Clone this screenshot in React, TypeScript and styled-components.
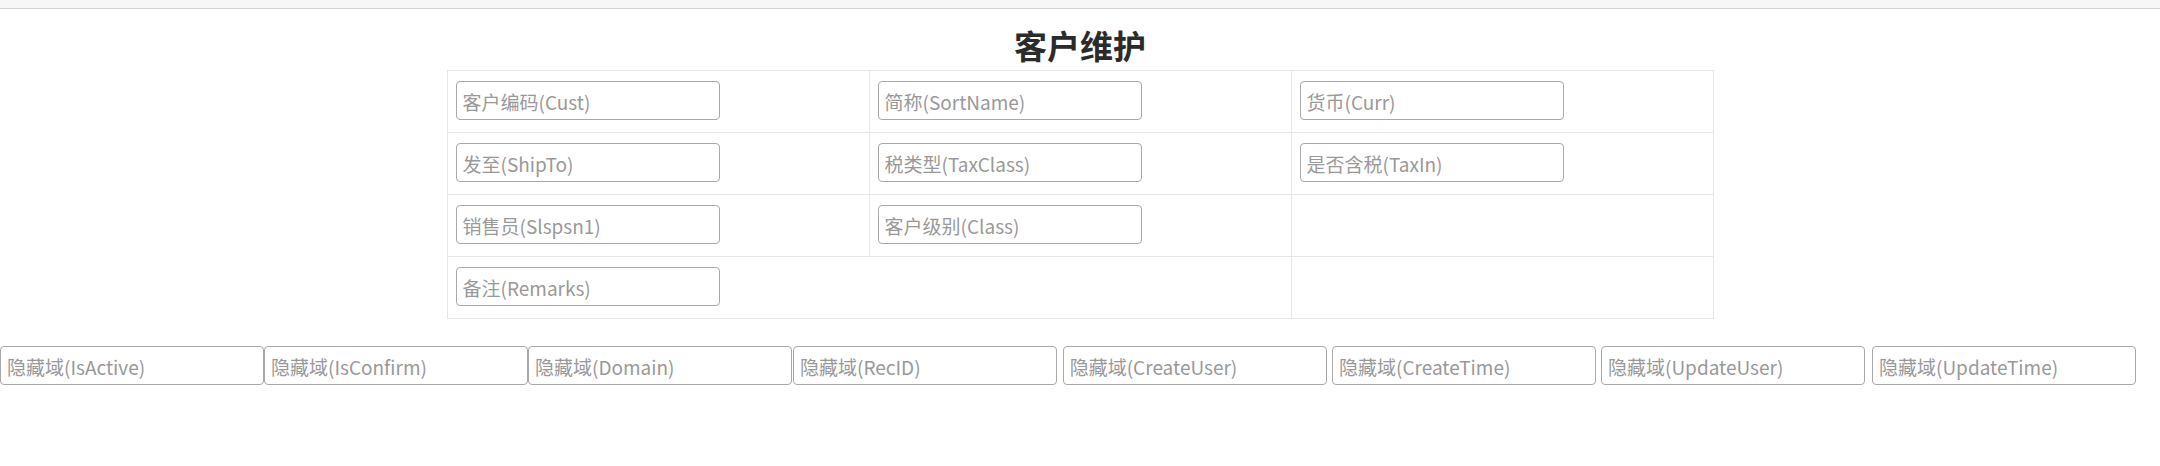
import styled, { createGlobalStyle } from 'styled-components'

const GlobalStyle = createGlobalStyle`
  html, body {
    margin: 0;
    padding: 0;
    background: #fff;
    font-family: "Noto Sans CJK SC", "Noto Sans", sans-serif;
  }
  * { box-sizing: border-box; }
`

const TopBar = styled.div`
  height: 9px;
  background: #f7f7f7;
  border-bottom: 1px solid #d2d2d2;
`

const Title = styled.h2`
  margin: 16px 0 5px;
  height: 40px;
  line-height: 40px;
  text-align: center;
  font-size: 33px;
  font-weight: 700;
  color: #2b2b2b;
`

const FormGrid = styled.div`
  display: grid;
  grid-template-columns: repeat(3, 422px);
  width: 1267px;
  margin: 0 auto;
  border-top: 1px solid #e6e6e6;
  border-left: 1px solid #e6e6e6;
`

const Cell = styled.div<{ $span?: number }>`
  grid-column: span ${p => p.$span || 1};
  height: 62px;
  padding: 10px 8px 0;
  border-right: 1px solid #e6e6e6;
  border-bottom: 1px solid #e6e6e6;
`

const Field = styled.input`
  display: block;
  width: 264px;
  height: 39px;
  padding: 1px 6px 0;
  border: 1px solid #a9a9a9;
  border-radius: 4px;
  background: #fff;
  font-family: "Noto Sans CJK SC", "Noto Sans", sans-serif;
  font-size: 19px;
  color: #333;
  outline: none;
  &::placeholder { color: #999; }
`

const HiddenRow = styled.div`
  display: flex;
  margin-top: 27px;
`

const HiddenSlot = styled.div<{ $gap: number }>`
  margin-left: ${p => p.$gap}px;
`

const rows: { name: string; span?: number }[][] = [
  [{ name: '客户编码(Cust)' }, { name: '简称(SortName)' }, { name: '货币(Curr)' }],
  [{ name: '发至(ShipTo)' }, { name: '税类型(TaxClass)' }, { name: '是否含税(TaxIn)' }],
  [{ name: '销售员(Slspsn1)' }, { name: '客户级别(Class)' }, { name: '' }],
  [{ name: '备注(Remarks)', span: 2 }, { name: '' }],
]

const hidden = ['IsActive', 'IsConfirm', 'Domain', 'RecID', 'CreateUser', 'CreateTime', 'UpdateUser', 'UpdateTime']
const gaps = [0, 0, 0, 1, 5.7, 5.3, 5, 7]

export default function App() {
  return (
    <>
      <GlobalStyle />
      <TopBar />
      <Title>客户维护</Title>
      <FormGrid>
        {rows.map((row, i) =>
          row.map((c, j) => (
            <Cell key={`${i}-${j}`} $span={c.span}>
              {c.name && <Field placeholder={c.name} />}
            </Cell>
          ))
        )}
      </FormGrid>
      <HiddenRow>
        {hidden.map((h, i) => (
          <HiddenSlot key={h} $gap={gaps[i]}>
            <Field placeholder={`隐藏域(${h})`} />
          </HiddenSlot>
        ))}
      </HiddenRow>
    </>
  )
}
